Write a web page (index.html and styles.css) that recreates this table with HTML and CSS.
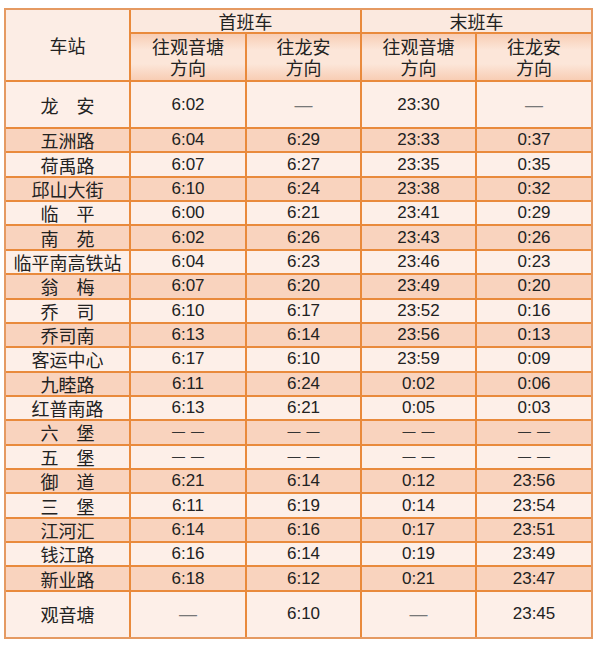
FILE: index.html
```html
<!DOCTYPE html>
<html lang="zh">
<head>
<meta charset="utf-8">
<title>首末班车时刻表</title>
<link rel="stylesheet" href="styles.css">
</head>
<body>
<div class="timetable">
  <div class="cell h-station">车站</div>
  <div class="cell h-group h-first">首班车</div>
  <div class="cell h-group h-last">末班车</div>
  <div class="cell h-sub"><span class="ln">往观音塘</span><span class="ln">方向</span></div>
  <div class="cell h-sub"><span class="ln">往龙安</span><span class="ln">方向</span></div>
  <div class="cell h-sub"><span class="ln">往观音塘</span><span class="ln">方向</span></div>
  <div class="cell h-sub"><span class="ln">往龙安</span><span class="ln">方向</span></div>

  <div class="cell st light">龙　安</div><div class="cell num light">6:02</div><div class="cell num light"><span class="dash">—</span></div><div class="cell num light">23:30</div><div class="cell num light"><span class="dash">—</span></div>
  <div class="cell st dark">五洲路</div><div class="cell num dark">6:04</div><div class="cell num dark">6:29</div><div class="cell num dark">23:33</div><div class="cell num dark">0:37</div>
  <div class="cell st light">荷禹路</div><div class="cell num light">6:07</div><div class="cell num light">6:27</div><div class="cell num light">23:35</div><div class="cell num light">0:35</div>
  <div class="cell st dark">邱山大街</div><div class="cell num dark">6:10</div><div class="cell num dark">6:24</div><div class="cell num dark">23:38</div><div class="cell num dark">0:32</div>
  <div class="cell st light">临　平</div><div class="cell num light">6:00</div><div class="cell num light">6:21</div><div class="cell num light">23:41</div><div class="cell num light">0:29</div>
  <div class="cell st dark">南　苑</div><div class="cell num dark">6:02</div><div class="cell num dark">6:26</div><div class="cell num dark">23:43</div><div class="cell num dark">0:26</div>
  <div class="cell st light">临平南高铁站</div><div class="cell num light">6:04</div><div class="cell num light">6:23</div><div class="cell num light">23:46</div><div class="cell num light">0:23</div>
  <div class="cell st dark">翁　梅</div><div class="cell num dark">6:07</div><div class="cell num dark">6:20</div><div class="cell num dark">23:49</div><div class="cell num dark">0:20</div>
  <div class="cell st light">乔　司</div><div class="cell num light">6:10</div><div class="cell num light">6:17</div><div class="cell num light">23:52</div><div class="cell num light">0:16</div>
  <div class="cell st dark">乔司南</div><div class="cell num dark">6:13</div><div class="cell num dark">6:14</div><div class="cell num dark">23:56</div><div class="cell num dark">0:13</div>
  <div class="cell st light">客运中心</div><div class="cell num light">6:17</div><div class="cell num light">6:10</div><div class="cell num light">23:59</div><div class="cell num light">0:09</div>
  <div class="cell st dark">九睦路</div><div class="cell num dark">6:11</div><div class="cell num dark">6:24</div><div class="cell num dark">0:02</div><div class="cell num dark">0:06</div>
  <div class="cell st light">红普南路</div><div class="cell num light">6:13</div><div class="cell num light">6:21</div><div class="cell num light">0:05</div><div class="cell num light">0:03</div>
  <div class="cell st dark">六　堡</div><div class="cell num dark"><span class="ddash">——</span></div><div class="cell num dark"><span class="ddash">——</span></div><div class="cell num dark"><span class="ddash">——</span></div><div class="cell num dark"><span class="ddash">——</span></div>
  <div class="cell st light">五　堡</div><div class="cell num light"><span class="ddash">——</span></div><div class="cell num light"><span class="ddash">——</span></div><div class="cell num light"><span class="ddash">——</span></div><div class="cell num light"><span class="ddash">——</span></div>
  <div class="cell st dark">御　道</div><div class="cell num dark">6:21</div><div class="cell num dark">6:14</div><div class="cell num dark">0:12</div><div class="cell num dark">23:56</div>
  <div class="cell st light">三　堡</div><div class="cell num light">6:11</div><div class="cell num light">6:19</div><div class="cell num light">0:14</div><div class="cell num light">23:54</div>
  <div class="cell st dark">江河汇</div><div class="cell num dark">6:14</div><div class="cell num dark">6:16</div><div class="cell num dark">0:17</div><div class="cell num dark">23:51</div>
  <div class="cell st light">钱江路</div><div class="cell num light">6:16</div><div class="cell num light">6:14</div><div class="cell num light">0:19</div><div class="cell num light">23:49</div>
  <div class="cell st dark">新业路</div><div class="cell num dark">6:18</div><div class="cell num dark">6:12</div><div class="cell num dark">0:21</div><div class="cell num dark">23:47</div>
  <div class="cell st light">观音塘</div><div class="cell num light"><span class="dash">—</span></div><div class="cell num light">6:10</div><div class="cell num light"><span class="dash">—</span></div><div class="cell num light">23:45</div>
</div>
</body>
</html>
```
FILE: styles.css
```css
html, body {
  margin: 0;
  padding: 0;
  background: #ffffff;
}
body {
  padding: 8px 0 0 4px;
  font-family: "Noto Sans CJK SC", "Liberation Sans", sans-serif;
  color: #222;
}
.timetable {
  display: grid;
  width: 585px;
  grid-template-columns: 123px 114px 113px 113px 114px;
  grid-template-rows: 22px 46px 45px repeat(19, 22.37px) 45px;
  gap: 2px;
  background: #e98a3c;
  border: 2px solid #e59a62;
}
.cell {
  display: flex;
  align-items: center;
  justify-content: center;
  text-align: center;
  min-height: 0;
}
.h-station {
  grid-row: 1 / 3;
  grid-column: 1;
  background: #fcede5;
  font-size: 18px;
  line-height: 22px;
}
.h-group {
  background: #fbe9df;
  font-size: 18px;
  line-height: 20px;
}
.h-first { grid-column: 2 / 4; }
.h-last { grid-column: 4 / 6; }
.h-sub {
  flex-direction: column;
  background: linear-gradient(to bottom, #f8cdb4 0%, #fce6d9 35%, #fce6d9 65%, #f8cdb4 100%);
  font-size: 18px;
  line-height: 21px;
}
.ln {
  display: block;
  height: 21px;
}
.st {
  font-size: 18px;
  line-height: 20px;
}
.num {
  font-family: "Liberation Sans", "Noto Sans CJK SC", sans-serif;
  font-size: 17px;
  line-height: 20px;
}
.light { background: #fdefe8; }
.dark { background: #f9d3be; }
.dash {
  color: #777;
  font-size: 18px;
}
.ddash {
  font-size: 13px;
  letter-spacing: 6px;
  margin-right: -6px;
  color: #333;
}
```
